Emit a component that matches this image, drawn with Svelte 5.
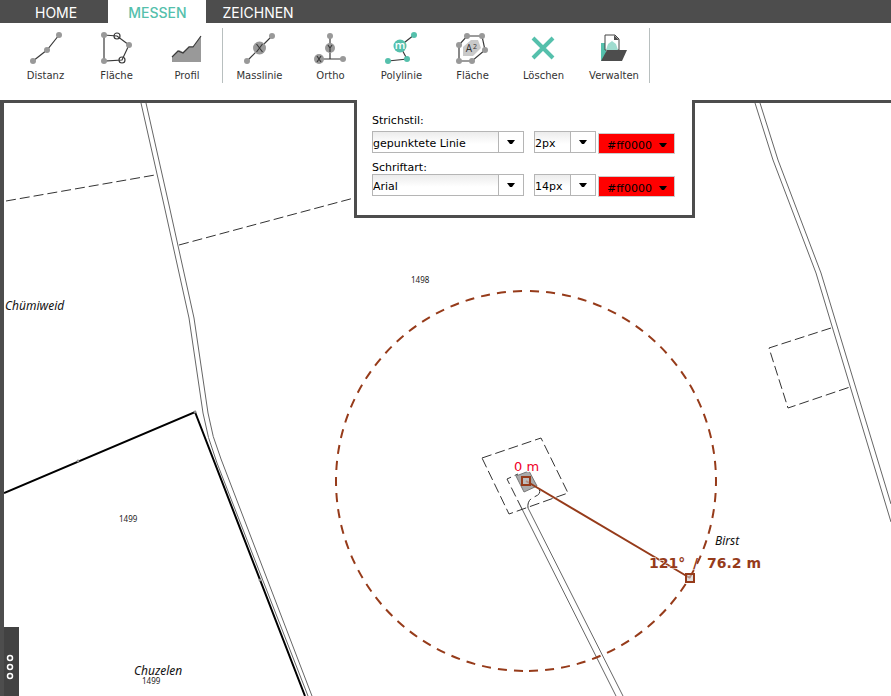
<script lang="ts">
    type Tool = { id: string; label: string };

    const tabs = ["HOME", "MESSEN", "ZEICHNEN"];
    const groups: Tool[][] = [
        [
            { id: "distance", label: "Distanz" },
            { id: "area", label: "Fläche" },
            { id: "profile", label: "Profil" },
        ],
        [
            { id: "dimension", label: "Masslinie" },
            { id: "ortho", label: "Ortho" },
            { id: "polyline", label: "Polylinie" },
            { id: "area2", label: "Fläche" },
            { id: "delete", label: "Löschen" },
            { id: "manage", label: "Verwalten" },
        ],
    ];

    let activeTab = $state("MESSEN");
    let lineStyle = $state("gepunktete Linie");
    let lineWidth = $state("2px");
    let fontFamily = $state("Arial");
    let fontSize = $state("14px");
    let lineColor = $state("#ff0000");
    let fontColor = $state("#ff0000");
</script>

{#snippet icon(id: string)}
    <svg class="icon" width="36" height="36" viewBox="0 0 36 36" aria-hidden="true">
        {#if id === "distance"}
            <path class="thin" d="M5 32L19 21L31 6" />
            <circle class="dot" cx="5" cy="32" r="3" />
            <circle class="dot" cx="19" cy="21" r="3" />
            <circle class="dot" cx="31" cy="6" r="3" />
        {:else if id === "area"}
            <path class="thin" d="M5 6L18 7L30 16L23 31L5 32Z" />
            <circle class="ring" cx="18" cy="7" r="3" />
            <circle class="ring" cx="23" cy="31" r="3" />
            <circle class="dot" cx="5" cy="6" r="3" />
            <circle class="dot" cx="30" cy="16" r="3" />
            <circle class="dot" cx="5" cy="32" r="3" />
        {:else if id === "profile"}
            <path class="dot" d="M3 28L10 21L14 23L20 17H25L32 7V33H3Z" />
            <path class="thin" d="M3 28L9 22L14 24L20 18H24L32 7" />
        {:else if id === "dimension"}
            <path class="thin" d="M5 32L30 7" />
            <circle class="dot" cx="5" cy="32" r="3" />
            <circle class="dot" cx="30" cy="7" r="3" />
            <circle class="dot" cx="17.5" cy="19" r="6.5" />
            <path class="thin" d="M14.5 15L20.5 23M20.5 15L14.5 23" />
        {:else if id === "ortho"}
            <path class="thin" d="M17 7V30M6 30H30" />
            <circle class="dot" cx="17" cy="7" r="3" />
            <circle class="dot" cx="30" cy="30" r="3" />
            <circle class="dot" cx="17" cy="19" r="5" />
            <circle class="dot" cx="6" cy="30" r="5" />
            <path class="thin" d="M15 16L17 19L19 16M17 19V23" />
            <path class="thin" d="M4 27L8 33M8 27L4 33" />
        {:else if id === "polyline"}
            <path class="thin" d="M30 6L16 17L23 30L4 32" />
            <circle class="accent" cx="30" cy="6" r="3" />
            <circle class="accent" cx="23" cy="30" r="3" />
            <circle class="accent" cx="4" cy="32" r="3" />
            <circle class="accent" cx="16" cy="17" r="6.5" />
            <text class="glyph light" x="16" y="20" font-size="11">m</text>
        {:else if id === "area2"}
            <path class="thin" d="M4 32V16L12 7H27L30 21L17 32Z" />
            <path class="inner" d="M8 18L16 11H23L26 19L18 27H8Z" />
            <circle class="dot" cx="12" cy="7" r="3" />
            <circle class="dot" cx="27" cy="7" r="3" />
            <circle class="dot" cx="4" cy="16" r="3" />
            <circle class="dot" cx="30" cy="21" r="3" />
            <circle class="dot" cx="17" cy="32" r="3" />
            <circle class="dot" cx="4" cy="32" r="3" />
            <text class="glyph" x="14" y="23" font-size="10">A</text>
            <text class="glyph" x="20" y="20" font-size="7">2</text>
        {:else if id === "delete"}
            <path class="cross" d="M7 9L27 29M27 9L7 29" />
        {:else if id === "manage"}
            <path class="accent" d="M5 14H10V30L5 32Z" />
            <path class="sheet" d="M9 6H19L23 10V21H9Z" />
            <path class="fold" d="M18 6L23 11H18Z" />
            <path class="pale" d="M10 21L12 15L16 12L20 15L22 21Z" />
            <path class="folder" d="M11 21H31L26 32H5Z" />
        {/if}
    </svg>
{/snippet}

{#snippet caret()}
    <svg class="caret" width="8" height="5" viewBox="0 0 8 5" aria-hidden="true">
        <path d="M0 0H8L5 4H3Z" />
    </svg>
{/snippet}

<div class="app">
    <nav class="tabs">
        {#each tabs as tab}
            <button
                class="tab"
                class:active={tab === activeTab}
                onclick={() => (activeTab = tab)}
            >
                {tab}
            </button>
        {/each}
    </nav>

    <div class="ribbon">
        {#each groups as tools}
            <div class="group">
                {#each tools as tool}
                    <button class="tool">
                        {@render icon(tool.id)}
                        <span>{tool.label}</span>
                    </button>
                {/each}
            </div>
        {/each}
    </div>

    <main class="map">
        <svg
            class="canvas"
            viewBox="4 103 887 593"
            preserveAspectRatio="xMinYMin slice"
            role="img"
            aria-label="Karte"
        >
            <!-- roads -->
            <g class="road">
                <path d="M141 103L164 205L189 318L203 413Q207 437 217 463L308 696" />
                <path d="M146 103L169 205L194 318L208 413Q212 437 221 459L312 696" />
                <path d="M755 103L773 160L816 273L891 522" />
                <path d="M760 103L778 160L821 273L891 504" />
                <path d="M522 509L616 696" />
                <path d="M528 508L623 696" />
            </g>

            <!-- parcel boundaries -->
            <path class="boundary" d="M4 493L195 412L305 696" />
            <circle class="point" cx="78" cy="461" r="1" />
            <circle class="point" cx="195" cy="412" r="1" />
            <circle class="point" cx="260" cy="580" r="1" />
            <g class="dashed">
                <path d="M6 201L155 175" />
                <path d="M179 245L354 198" />
                <path d="M831 328L769 348L788 408L850 387" />
                <path d="M482 458L541 438L568 493L509 514Z" />
                <path d="M522 509L507 479L518 474M528 508Q527 500 534 497Q542 494 539 489" />
            </g>
            <path class="building" d="M516 476L529 471L537 486L524 492Z" />

            <text class="parcel" x="411" y="283">1498</text>
            <text class="parcel" x="119" y="522">1499</text>
            <text class="parcel" x="142" y="684">1499</text>
            <text class="place" x="5" y="310">Chümiweid</text>
            <text class="place" x="134" y="675">Chuzelen</text>
            <text class="place" x="715" y="545">Birst</text>

            <!-- measurement -->
            <g class="measure">
                <path class="radius" pathLength="592" d="M526 291A190 190 0 0 1 526 671" />
                <path class="radius" pathLength="592" d="M526 291A190 190 0 0 0 526 671" />
                <path d="M526 481L690 578" />
                <rect x="522" y="477" width="8" height="8" />
                <rect x="686" y="574" width="8" height="8" />
            </g>
            <text class="start" x="514" y="471">0 m</text>
            <text class="result" y="568">
                <tspan x="649">121°</tspan>
                <tspan class="slash" x="693">/</tspan>
                <tspan x="707">76.2 m</tspan>
            </text>
        </svg>

        <form class="panel">
            <label for="line-style">Strichstil:</label>
            <div class="fields">
                <div class="combo wide">
                    <select id="line-style" bind:value={lineStyle}>
                        <option>gepunktete Linie</option>
                        <option>durchgezogene Linie</option>
                    </select>
                    <span class="arrow">{@render caret()}</span>
                </div>
                <div class="combo">
                    <select aria-label="Strichbreite" bind:value={lineWidth}>
                        <option>1px</option>
                        <option>2px</option>
                        <option>3px</option>
                    </select>
                    <span class="arrow">{@render caret()}</span>
                </div>
                <button type="button" class="color" style="background-color: {lineColor}">
                    {lineColor}
                    {@render caret()}
                </button>
            </div>
            <label for="font-family">Schriftart:</label>
            <div class="fields">
                <div class="combo wide">
                    <select id="font-family" bind:value={fontFamily}>
                        <option>Arial</option>
                        <option>Verdana</option>
                    </select>
                    <span class="arrow">{@render caret()}</span>
                </div>
                <div class="combo">
                    <select aria-label="Schriftgrösse" bind:value={fontSize}>
                        <option>12px</option>
                        <option>14px</option>
                        <option>16px</option>
                    </select>
                    <span class="arrow">{@render caret()}</span>
                </div>
                <button type="button" class="color" style="background-color: {fontColor}">
                    {fontColor}
                    {@render caret()}
                </button>
            </div>
        </form>

        <button class="drawer" aria-label="Menü">
            <svg width="8" height="28" viewBox="0 0 8 28" aria-hidden="true">
                <circle cx="4" cy="5" r="2.5" />
                <circle cx="4" cy="14" r="2.5" />
                <circle cx="4" cy="23" r="2.5" />
            </svg>
        </button>
    </main>
</div>

<style>
    :global(body) {
        margin: 0;
    }

    .app {
        --dark: #4d4d4d;
        --accent: #55c0ac;
        display: flex;
        flex-direction: column;
        height: 100vh;
        overflow: hidden;
        background: #fff;
        font-family: "DejaVu Sans", sans-serif;
        color: #333;
    }

    button {
        border: 0;
        padding: 0;
        background: none;
        font: inherit;
        color: inherit;
        cursor: pointer;
    }

    .tabs {
        display: flex;
        height: 23px;
        padding-left: 4px;
        background: var(--dark);
    }

    .tab {
        padding: 2px 17px 0;
        font: 400 14px "Inter", sans-serif;
        color: #fff;
    }

    .tab:first-child {
        padding: 2px 31px 0;
    }

    .tab.active {
        padding: 2px 19px 0 20px;
        background: #fff;
        color: var(--accent);
        font-weight: 500;
    }

    .ribbon {
        display: flex;
        gap: 1px;
        height: 77px;
        padding-left: 10px;
    }

    .group {
        display: flex;
        box-sizing: border-box;
        height: 55px;
        margin-top: 5px;
        border-right: 1px solid #b8bfbf;
    }

    .tool {
        display: flex;
        flex-direction: column;
        align-items: center;
        width: 71px;
        padding-top: 1px;
        font-size: 10px;
        line-height: 12px;
    }

    .group .tool:last-child {
        width: 70px;
    }

    .icon {
        display: block;
        margin-bottom: 5px;
    }

    .icon .thin,
    .icon .ring {
        fill: none;
        stroke: #3a3a3a;
        stroke-width: 1.2;
    }

    .icon .dot {
        fill: #999;
    }

    .icon .accent {
        fill: var(--accent);
    }

    .icon .inner {
        fill: #c9c9c9;
    }

    .icon .cross {
        fill: none;
        stroke: var(--accent);
        stroke-width: 4;
    }

    .icon .sheet {
        fill: #fff;
        stroke: #444;
    }

    .icon .pale {
        fill: #9fdccf;
    }

    .icon .fold,
    .icon .folder {
        fill: #4d4d4d;
    }

    .glyph {
        font-family: "Open Sans", sans-serif;
        text-anchor: middle;
        fill: #333;
    }

    .glyph.light {
        fill: #fff;
        font-weight: 600;
    }

    .map {
        position: relative;
        flex: 1;
        min-height: 0;
        border-top: 3px solid var(--dark);
        border-left: 4px solid var(--dark);
    }

    .canvas {
        display: block;
        width: 100%;
        height: 100%;
    }

    .road path {
        fill: none;
        stroke: #666;
        stroke-width: 1;
    }

    .boundary {
        fill: none;
        stroke: #000;
        stroke-width: 2;
    }

    .point {
        fill: #fff;
        stroke: #777;
    }

    .dashed path {
        fill: none;
        stroke: #333;
        stroke-dasharray: 10 4;
    }

    .building {
        fill: #aaa;
        stroke: #777;
    }

    .parcel {
        font: 8px "Noto Sans", sans-serif;
        fill: #222;
    }

    .place {
        font: italic 12px "Noto Sans", sans-serif;
        fill: #111;
    }

    .measure {
        fill: none;
        stroke: #963b1a;
        stroke-width: 2;
    }

    .measure .radius {
        stroke-dasharray: 9 7;
        stroke-dashoffset: -4;
    }

    .measure rect {
        fill: #cccccc99;
    }

    .start {
        font-size: 13px;
        fill: #f00028;
        stroke: #fff;
        stroke-width: 2;
        paint-order: stroke;
    }

    .result {
        font-size: 14px;
        font-weight: bold;
        fill: #963b1a;
        stroke: #fff;
        stroke-width: 1;
        paint-order: stroke;
    }

    .result .slash {
        stroke: none;
    }

    .panel {
        position: absolute;
        top: -3px;
        left: 350px;
        display: flex;
        flex-direction: column;
        padding: 14px 17px 19px 15px;
        border: 3px solid var(--dark);
        border-top: 0;
        background: #fff;
        font-size: 11px;
        color: #000;
    }

    .panel label {
        line-height: 13px;
    }

    .fields {
        display: flex;
        height: 22px;
    }

    .fields:nth-of-type(1) {
        margin: 4px 0 8px;
    }

    .combo {
        position: relative;
        width: 62px;
        margin-right: 2px;
    }

    .combo.wide {
        width: 152px;
        margin-right: 10px;
    }

    .combo select {
        appearance: none;
        box-sizing: border-box;
        width: 100%;
        height: 22px;
        padding: 2px 26px 0 0;
        border: 1px solid #b5b5b5;
        border-radius: 0;
        background: linear-gradient(#ececec, #fff 12px);
        font: inherit;
        color: inherit;
    }

    .arrow {
        position: absolute;
        top: 1px;
        right: 1px;
        bottom: 1px;
        display: flex;
        align-items: center;
        justify-content: center;
        width: 24px;
        border-left: 1px solid #b5b5b5;
        background: #fff;
        pointer-events: none;
    }

    .color {
        display: flex;
        align-items: center;
        justify-content: center;
        gap: 7px;
        box-sizing: border-box;
        width: 77px;
        height: 21px;
        margin-top: 2px;
        padding: 3px 0 0 1px;
        border: 1px solid #ccc;
    }

    .drawer {
        position: absolute;
        left: 0;
        bottom: 0;
        display: flex;
        align-items: center;
        justify-content: center;
        width: 15px;
        height: 69px;
        padding: 10px 3px 0 0;
        background: #424242;
    }

    .drawer circle {
        fill: none;
        stroke: #fff;
        stroke-width: 1.5;
    }
</style>
